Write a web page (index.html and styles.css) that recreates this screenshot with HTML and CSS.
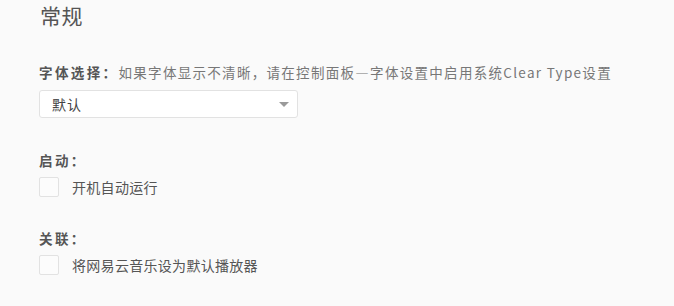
FILE: index.html
```html
<!DOCTYPE html>
<html lang="zh-CN">
<head>
<meta charset="utf-8">
<title>常规</title>
<link rel="stylesheet" href="styles.css">
</head>
<body>
<main class="settings">
  <h2 class="title">常规</h2>

  <section class="group group-font">
    <div class="label"><b class="key">字体选择：</b><span class="hint">如果字体显示不清晰，请在控制面板—字体设置中启用系统Clear Type设置</span></div>
    <div class="select">
      <span class="select-value">默认</span>
      <span class="select-arrow"></span>
    </div>
  </section>

  <section class="group group-start">
    <div class="label"><b class="key">启动：</b></div>
    <label class="check">
      <span class="box"></span>
      <span class="check-text">开机自动运行</span>
    </label>
  </section>

  <section class="group group-assoc">
    <div class="label"><b class="key">关联：</b></div>
    <label class="check">
      <span class="box"></span>
      <span class="check-text">将网易云音乐设为默认播放器</span>
    </label>
  </section>
</main>
</body>
</html>
```
FILE: styles.css
```css
html, body {
  margin: 0;
  padding: 0;
  background: #fafafa;
}

body {
  font-family: "Noto Sans CJK SC", "Noto Sans", "Liberation Sans", sans-serif;
  color: #666;
  width: 674px;
  height: 306px;
  overflow: hidden;
}

.settings {
  padding-left: 39px;
}

.title {
  margin: 0;
  font-size: 21px;
  line-height: 30px;
  font-weight: normal;
  color: #555;
  padding-left: 1px;
  letter-spacing: 0.5px;
}

.group-font {
  margin-top: 32px;
}

.group-start {
  margin-top: 32px;
}

.group-assoc {
  margin-top: 31px;
}

.label {
  font-size: 13.5px;
  line-height: 20px;
  white-space: nowrap;
}

.key {
  font-weight: bold;
  color: #555;
  letter-spacing: 2.4px;
}

.hint {
  color: #777;
  letter-spacing: 1.3px;
}

.select {
  margin-top: 8px;
  height: 26px;
  width: 237px;
  border: 1px solid #e2e2e2;
  border-radius: 3px;
  background: #fff;
  display: flex;
  align-items: center;
  justify-content: space-between;
  padding: 0 8px 0 12px;
  box-sizing: content-box;
}

.select-value {
  font-size: 14px;
  color: #444;
  letter-spacing: 1px;
}

.select-arrow {
  width: 0;
  height: 0;
  border-left: 5.5px solid transparent;
  border-right: 5.5px solid transparent;
  border-top: 5px solid #9a9a9a;
  margin-top: 1px;
}

.check {
  margin-top: 7px;
  display: flex;
  align-items: center;
  height: 20px;
}

.box {
  width: 18px;
  height: 18px;
  border: 1px solid #e2e2e2;
  border-radius: 2px;
  background: #fcfcfc;
  flex: none;
}

.check-text {
  margin-left: 13px;
  font-size: 14px;
  letter-spacing: 0.3px;
  color: #555;
}
```
